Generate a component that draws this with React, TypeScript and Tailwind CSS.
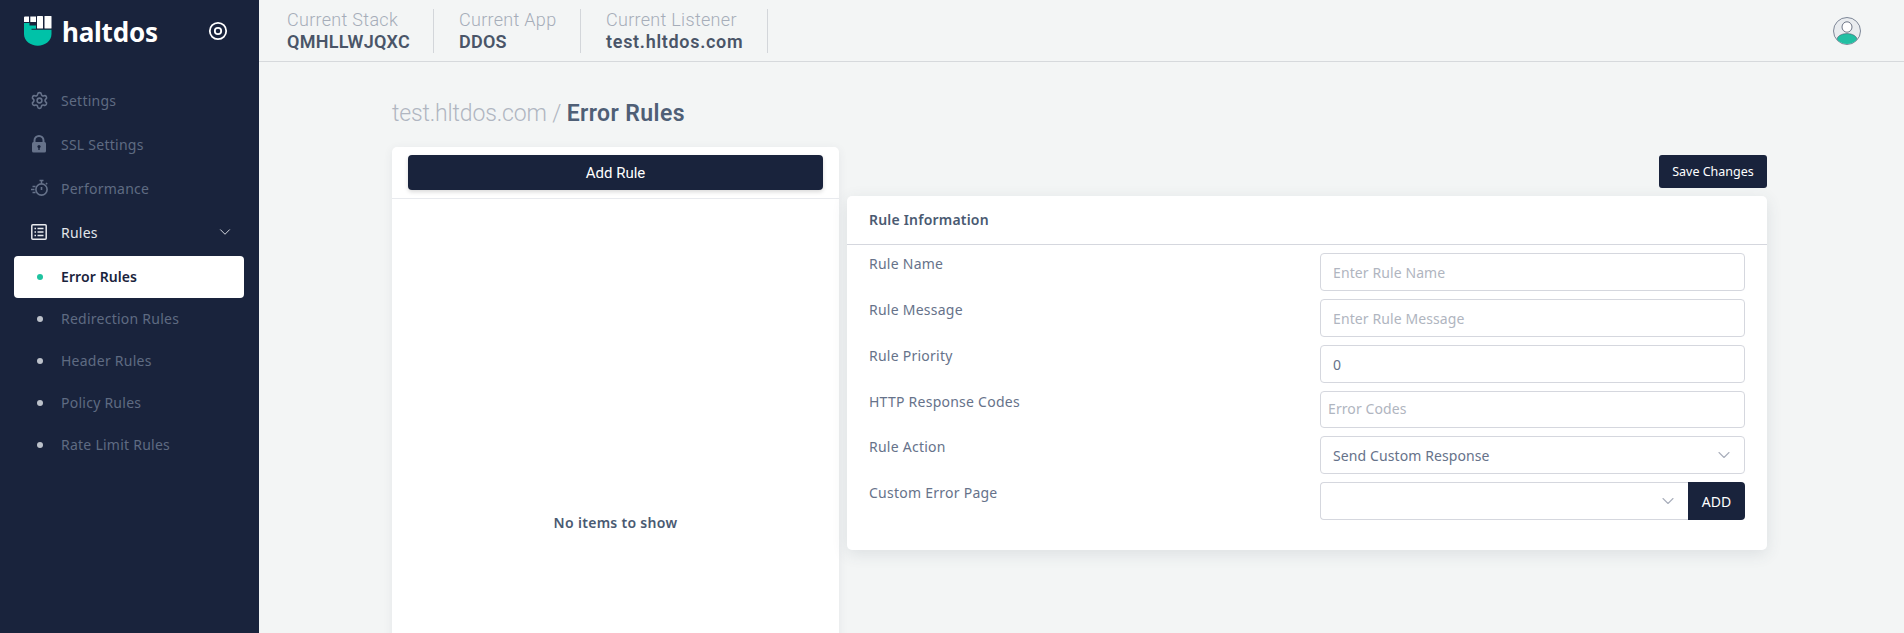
import React from "react";
import { Settings, ChevronDown } from "lucide-react";

const plex = "font-['Noto_Sans','Liberation_Sans',sans-serif]";
const rubik = "font-['Roboto','Liberation_Sans',sans-serif]";

function Logo() {
  return (
    <svg width="28" height="30" viewBox="0 0 28 30" className="shrink-0">
      <path d="M0 1.5a1 1 0 0 1 1-1h4v5.5H0z" fill="#fff" />
      <rect x="6.3" y="0.5" width="5.7" height="5.5" fill="#fff" />
      <rect x="13" y="0" width="6" height="12.5" rx="0.6" fill="#fff" />
      <rect x="20.5" y="0" width="7" height="12.5" rx="0.6" fill="#fff" />
      <path
        d="M0 7h5.5v2.5H12v3.2H7.5v1h20V18c0 7-6.5 11.5-13.7 11.7C6.5 29.5 0 25 0 18z"
        fill="#00c2a8"
      />
    </svg>
  );
}

function Target() {
  return (
    <svg width="20" height="20" viewBox="0 0 20 20" fill="none" className="shrink-0">
      <circle cx="10" cy="10" r="8.2" stroke="#fff" strokeWidth="1.8" />
      <circle cx="10" cy="10" r="3.2" stroke="#fff" strokeWidth="1.8" />
    </svg>
  );
}

function LockIcon() {
  return (
    <svg width="16" height="18" viewBox="0 0 16 18" className="shrink-0">
      <path d="M3.5 8V5.5a4.5 4.5 0 0 1 9 0V8" fill="none" stroke="#66728a" strokeWidth="2" />
      <rect x="1" y="7" width="14" height="10.5" rx="1.5" fill="#66728a" />
      <circle cx="8" cy="11.5" r="1.6" fill="#19233c" />
      <rect x="7.3" y="12" width="1.4" height="3" fill="#19233c" />
    </svg>
  );
}

function TimerIcon() {
  return (
    <svg width="17" height="18" viewBox="0 0 17 18" fill="none" className="shrink-0">
      <circle cx="10.5" cy="10.5" r="5.6" stroke="#66728a" strokeWidth="1.6" />
      <path d="M10.5 8v3" stroke="#66728a" strokeWidth="1.6" />
      <path d="M8.5 1.6h4M10.5 1.6v3M15 4l1.2 1.2" stroke="#66728a" strokeWidth="1.5" />
      <path d="M1.5 7.5h3M0 10.5h3.5M1.5 13.5h3" stroke="#66728a" strokeWidth="1.4" />
    </svg>
  );
}

function ListIcon() {
  return (
    <svg width="16" height="16" viewBox="0 0 16 16" fill="none" className="shrink-0">
      <rect x="0.8" y="0.8" width="14.4" height="14.4" rx="1" stroke="#e8eaee" strokeWidth="1.5" />
      <path d="M3.5 4.5h1.5M3.5 8h1.5M3.5 11.500h1.500M6.500 4.500h6M6.500 8h6M6.500 11.500h6" stroke="#e8eaee" strokeWidth="1.5" />
    </svg>
  );
}

function Avatar() {
  return (
    <svg width="28" height="28" viewBox="0 0 28 28" className="shrink-0">
      <defs>
        <clipPath id="avatar-clip">
          <circle cx="14" cy="14" r="13" />
        </clipPath>
      </defs>
      <circle cx="14" cy="14" r="13.500" fill="#e9ecef" stroke="#707a8c" strokeWidth="0.9" />
      <g clipPath="url(#avatar-clip)">
        <ellipse cx="14" cy="22.500" rx="10" ry="6" fill="#22bfa3" stroke="#3f4a60" strokeWidth="0.5" />
      </g>
      <ellipse cx="14" cy="10" rx="5" ry="5.200" fill="#fff" stroke="#4b556a" strokeWidth="0.8" />
    </svg>
  );
}

function MainItem({ icon, label, light, chevron }: { icon: React.ReactNode; label: string; light?: boolean; chevron?: boolean }) {
  return (
    <div className={`flex h-[44px] items-center pl-[31px] pr-[25px] text-[14px] tracking-[0.25px] ${light ? "text-[#e3e6ea]" : "text-[#5f6b82]"}`}>
      <span className="flex w-[30px] shrink-0 items-center">{icon}</span>
      <span>{label}</span>
      {chevron && <ChevronDown size={18} strokeWidth={1.3} className="ml-auto text-[#d9dce2]" />}
    </div>
  );
}

function SubItem({ label }: { label: string }) {
  return (
    <div className="flex h-[42px] items-center pl-[37px] text-[14px] tracking-[0.25px] text-[#5f6b82]">
      <span className="mr-[18px] h-[6px] w-[6px] rounded-full bg-[#bcc1ca]" />
      <span className="pb-[2px]">{label}</span>
    </div>
  );
}

function Sidebar() {
  return (
    <aside className={`flex h-full w-[259px] shrink-0 flex-col bg-[#19233c] ${plex}`}>
      <div className="flex h-[62px] items-center pl-[24px] pr-[31px]">
        <Logo />
        <span className={`ml-[10px] pt-[2px] text-[26px] leading-none font-bold tracking-[-0.2px] text-white ${plex}`}>haltdos</span>
        <span className="ml-auto"><Target /></span>
      </div>
      <div className="flex flex-col pt-[16px]">
        <MainItem icon={<Settings size={19} className="-ml-[1px] text-[#66728a]" />} label="Settings" />
        <MainItem icon={<LockIcon />} label="SSL Settings" />
        <MainItem icon={<TimerIcon />} label="Performance" />
        <MainItem icon={<ListIcon />} label="Rules" light chevron />
      </div>
      <div className="flex flex-col pt-[2px]">
        <div className="ml-[14px] mr-[15px] flex h-[42px] items-center rounded-[4px] bg-white pl-[23px] text-[14px] font-semibold tracking-[0.1px] text-[#19233c]">
          <span className="mr-[18px] h-[6px] w-[6px] rounded-full bg-[#1fc3a0]" />
          <span className="pb-[2px]">Error Rules</span>
        </div>
        <SubItem label="Redirection Rules" />
        <SubItem label="Header Rules" />
        <SubItem label="Policy Rules" />
        <SubItem label="Rate Limit Rules" />
      </div>
    </aside>
  );
}

function Crumb({ title, value, className, valueClass }: { title: string; value: string; className: string; valueClass: string }) {
  return (
    <div className={`flex h-[44px] flex-col justify-center border-r border-[#d3d6da] pl-[25px] ${className}`}>
      <div className="text-[18px] leading-[22px] font-light tracking-[0.3px] text-[#a6adb9]">{title}</div>
      <div className={`text-[18px] leading-[22px] font-semibold text-[#4a5568] ${valueClass}`}>{value}</div>
    </div>
  );
}

function TopBar() {
  return (
    <header className={`flex h-[62px] shrink-0 items-center border-b border-[#d6d9dc] pr-[43px] ${rubik}`}>
      <div className="ml-[3px] flex items-center">
        <Crumb title="Current Stack" value="QMHLLWJQXC" className="w-[172px]" valueClass="tracking-[0.25px]" />
        <Crumb title="Current App" value="DDOS" className="w-[147px]" valueClass="tracking-[0.25px]" />
        <Crumb title="Current Listener" value="test.hltdos.com" className="w-[187px]" valueClass="tracking-[0.7px]" />
      </div>
      <span className="ml-auto"><Avatar /></span>
    </header>
  );
}

function Field({ label, children, short }: { label: string; children: React.ReactNode; short?: boolean }) {
  return (
    <div className={`flex ${short ? "h-[37px]" : "h-[38px]"}`}>
      <div className="flex-1 text-[14px] leading-[22px] tracking-[0.25px] text-[#66728a]">{label}</div>
      <div className="w-[425px]">{children}</div>
    </div>
  );
}

const inputCls =
  "h-full w-full rounded-[4px] border border-[#d5d7de] bg-white text-[14px] tracking-[0.1px] text-[#66728a] outline-none placeholder:text-[#b0b5c0]";

function RuleForm() {
  return (
    <div className="rounded-[5px] bg-white shadow-[0_4px_16px_rgba(60,70,90,0.12)]">
      <div className="flex h-[49px] items-center border-b border-[#d5d7de] px-[22px] pb-[2px] text-[14px] font-semibold tracking-[0.2px] text-[#4a5a72]">
        Rule Information
      </div>
      <div className="flex flex-col gap-[8px] pt-[8px] pr-[22px] pb-[30px] pl-[22px]">
        <Field label="Rule Name"><input className={`${inputCls} px-[12px]`} placeholder="Enter Rule Name" /></Field>
        <Field label="Rule Message"><input className={`${inputCls} px-[12px]`} placeholder="Enter Rule Message" /></Field>
        <Field label="Rule Priority"><input className={`${inputCls} px-[12px]`} defaultValue="0" /></Field>
        <Field label="HTTP Response Codes" short><input className={`${inputCls} px-[7px] pb-[2px]`} placeholder="Error Codes" /></Field>
        <Field label="Rule Action">
          <div className={`${inputCls} flex items-center justify-between pr-[10px] pl-[12px]`}>
            <span>Send Custom Response</span>
            <ChevronDown size={20} strokeWidth={1.3} className="text-[#a9aebb]" />
          </div>
        </Field>
        <Field label="Custom Error Page">
          <div className="flex h-full">
            <div className="flex flex-1 items-center justify-end rounded-l-[4px] border border-r-0 border-[#d5d7de] pr-[10px]">
              <ChevronDown size={20} strokeWidth={1.3} className="text-[#a9aebb]" />
            </div>
            <div className="flex w-[57px] items-center justify-center rounded-r-[4px] bg-[#19233c] text-[14px] text-white">ADD</div>
          </div>
        </Field>
      </div>
    </div>
  );
}

export default function App() {
  return (
    <div className="flex h-screen w-full overflow-hidden bg-[#f3f5f5]">
      <Sidebar />
      <main className="flex min-w-0 flex-1 flex-col">
        <TopBar />
        <div className="flex min-h-0 flex-1 flex-col pr-[137px] pl-[133px]">
          <h1 className={`flex h-[85px] shrink-0 items-center pt-[20px] text-[23px] ${rubik}`}>
            <span className="font-light tracking-[-0.15px] text-[#b0b6c1]">test.hltdos.com /&nbsp;</span>
            <span className="font-semibold tracking-[0.4px] text-[#4f5f76]">Error Rules</span>
          </h1>
          <div className={`flex min-h-0 flex-1 gap-[8px] ${plex}`}>
            <section className="h-[600px] w-[447px] shrink-0 rounded-[5px] bg-white shadow-[0_2px_10px_rgba(60,70,90,0.08)]">
              <div className="h-[52px] border-b border-[#e8eaee] px-[16px] pt-[8px]">
                <button className={`h-[35px] w-full rounded-[4px] bg-[#19233c] pt-[1px] text-[15px] text-white shadow-[0_2px_4px_rgba(0,0,0,0.15)] ${rubik}`}>
                  Add Rule
                </button>
              </div>
              <div className="flex h-[646px] items-center justify-center text-[14px] font-semibold tracking-[0.3px] text-[#4a5a72]">
                No items to show
              </div>
            </section>
            <section className="flex min-w-0 flex-1 flex-col pt-[8px]">
              <button className="mb-[8px] h-[33px] w-[108px] self-end rounded-[3px] bg-[#19233c] pt-[2px] text-[12.5px] text-white">
                Save Changes
              </button>
              <RuleForm />
            </section>
          </div>
        </div>
      </main>
    </div>
  );
}
